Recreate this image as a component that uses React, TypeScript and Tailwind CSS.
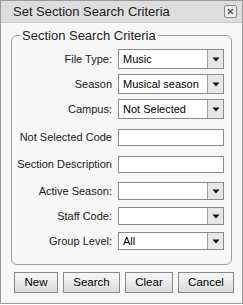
import React from "react";

const font = { fontFamily: '"Liberation Sans", Arial, sans-serif' };

function Arrow() {
  return (
    <div className="w-[16px] h-full border-l border-[#a0a0a0] bg-[#e6e6e6] flex items-center justify-center">
      <svg width="8" height="5" viewBox="0 0 8 5">
        <path d="M0.5 0.5 L7.5 0.5 L4 4.5 Z" fill="#111" />
      </svg>
    </div>
  );
}

function Select({ value, h }: { value: string; h: string }) {
  return (
    <div className={`w-[106px] ${h} border border-[#8a8a8a] bg-white flex items-stretch`}>
      <div className="flex-1 pl-[4px] flex items-center text-[11px] text-black overflow-hidden whitespace-nowrap">
        {value}
      </div>
      <Arrow />
    </div>
  );
}

function Row({
  label,
  children,
  mt,
}: {
  label: string;
  children: React.ReactNode;
  mt: string;
}) {
  return (
    <div className={`flex items-center ${mt}`}>
      <div className="w-[100px] text-right text-[11px] text-[#1a1a1a] whitespace-nowrap">{label}</div>
      <div className="ml-[6px]">{children}</div>
    </div>
  );
}

function TextBox() {
  return <div className="w-[106px] h-[17px] border border-[#8a8a8a] bg-white" />;
}

function Btn({ label, w }: { label: string; w: string }) {
  return (
    <div
      className={`${w} h-[21px] border border-[#8a8a8a] bg-gradient-to-b from-[#f7f7f7] to-[#dcdcdc] flex items-center justify-center text-[11.5px] text-black`}
    >
      {label}
    </div>
  );
}

export default function App() {
  return (
    <div style={font} className="w-[243px] h-[305px] bg-white">
      <div className="w-[243px] h-[304px] border border-[#9a9a9a] flex flex-col bg-[#f7f7f7]">
        <div className="h-[22px] bg-[#dddddd] border-b border-[#c4c4c4] flex items-center pl-[12px] pr-[5px]">
          <span className="text-[13px] text-[#222] flex-1">Set Section Search Criteria</span>
          <div className="w-[13px] h-[13px] border border-[#8c8c8c] rounded-[2px] bg-[#eeeeee] flex items-center justify-center">
            <svg width="7" height="7" viewBox="0 0 7 7">
              <path d="M1 1 L6 6 M6 1 L1 6" stroke="#555" strokeWidth="1.3" />
            </svg>
          </div>
        </div>
        <div className="px-[10px]">
          <fieldset className="mt-[5px] h-[237px] border border-[#a0a0a0] rounded-[6px] px-0 pb-0">
            <legend className="ml-[8px] px-[2px] text-[13px] text-[#222] leading-[15px]">Section Search Criteria</legend>
            <Row label="File Type:" mt="mt-[6px]">
              <Select value="Music" h="h-[20px]" />
            </Row>
            <Row label="Season" mt="mt-[5px]">
              <Select value="Musical season" h="h-[20px]" />
            </Row>
            <Row label="Campus:" mt="mt-[5px]">
              <Select value="Not Selected" h="h-[20px]" />
            </Row>
            <Row label="Not Selected Code" mt="mt-[10px]">
              <TextBox />
            </Row>
            <Row label="Section Description" mt="mt-[10px]">
              <TextBox />
            </Row>
            <Row label="Active Season:" mt="mt-[9px]">
              <Select value="" h="h-[18px]" />
            </Row>
            <Row label="Staff Code:" mt="mt-[7px]">
              <Select value="" h="h-[18px]" />
            </Row>
            <Row label="Group Level:" mt="mt-[7px]">
              <Select value="All" h="h-[18px]" />
            </Row>
          </fieldset>
        </div>
        <div className="flex mt-[7px] pl-[13px] gap-[5px]">
          <Btn label="New" w="w-[44px]" />
          <Btn label="Search" w="w-[57px]" />
          <Btn label="Clear" w="w-[48px]" />
          <Btn label="Cancel" w="w-[56px]" />
        </div>
      </div>
    </div>
  );
}
